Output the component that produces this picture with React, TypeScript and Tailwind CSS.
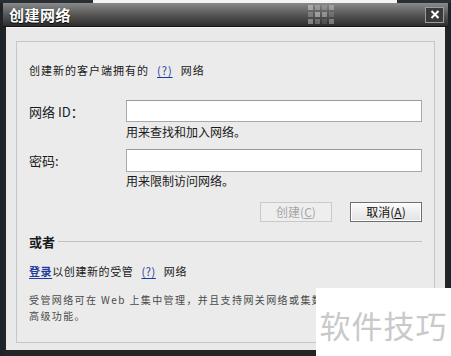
import React from "react";

const CJK = '"Noto Sans CJK SC", "Liberation Sans", sans-serif';

/* 标题栏右侧的方格装饰 */
function Checker() {
  const cells = [
    [0.5, 0.35, 0.25, 0.4],
    [0.3, 0.55, 0.45, 0.2],
    [0.45, 0.3, 0.15, 0.4],
  ];
  return (
    <div className="flex flex-col gap-[2px]">
      {cells.map((row, i) => (
        <div key={i} className="flex gap-[2px]">
          {row.map((o, j) => (
            <span
              key={j}
              className="block w-[5px] h-[5px] bg-[#d8d8d8]"
              style={{ opacity: o }}
            />
          ))}
        </div>
      ))}
    </div>
  );
}

function HelpLink() {
  return <span className="text-[#1f3c9c] underline underline-offset-2 mx-[8px]">(?)</span>;
}

export default function App() {
  return (
    <div
      className="relative w-[451px] h-[356px] overflow-hidden bg-[#1c2329] flex flex-col"
      style={{ fontFamily: CJK }}
    >
      {/* 顶部背景条 */}
      <div className="h-[3px] flex">
        <div className="w-[93px] bg-[#2a2f33]" />
        <div className="w-[304px] bg-[#f4f4f4]" />
        <div className="flex-1 bg-[#2a2f33]" />
      </div>

      {/* 窗口 */}
      <div className="ml-[3px] w-[445px] flex-1 flex flex-col bg-[#242424]">
        {/* 标题栏 */}
        <div className="relative h-[24px] flex items-center pl-[6px] pr-[4px] bg-gradient-to-b from-[#8a8a8a] via-[#575757] to-[#2e2e2e] border-b border-[#151515]">
          <span className="text-white font-bold text-[15px] leading-none tracking-[0.5px] [text-shadow:0_1px_1px_#000]">
            创建网络
          </span>
          <div className="absolute left-[305px] top-[2px]">
            <Checker />
          </div>
          <div className="ml-auto w-[19px] h-[16px] border border-[#9c9c9c] bg-[#3a3a3a] flex items-center justify-center">
            <svg width="10" height="9" viewBox="0 0 10 9">
              <path d="M1.5 1 L8.5 8 M8.5 1 L1.5 8" stroke="#fff" strokeWidth="2" />
            </svg>
          </div>
        </div>

        {/* 窗体 */}
        <div className="mx-[3px] mb-[6px] flex-1 bg-[#e9e9e9] border-t border-[#f6f6f6] pt-[13px] pl-[10px] pr-[10px] pb-[7px] flex">
          <div className="flex-1 border border-[#c6c6c6] bg-[#ebebeb] overflow-hidden px-[12px] flex flex-col text-[#1a1a1a]">
            <div className="mt-[20px] h-[16px] flex items-center text-[11px] tracking-[1px] whitespace-nowrap">
              创建新的客户端拥有的
              <HelpLink />
              网络
            </div>

            <div className="mt-[22px] grid grid-cols-[97px_1fr] items-center">
              <span className="text-[13px] leading-none">网络 ID：</span>
              <div className="h-[22px] bg-white border border-[#a9a9a9] border-t-[#9a9a9a]" />
              <span />
              <span className="mt-[2px] h-[16px] text-[12px] leading-[16px]">用来查找和加入网络。</span>
            </div>

            <div className="mt-[9px] grid grid-cols-[97px_1fr] items-center">
              <span className="text-[13px] leading-none">密码:</span>
              <div className="h-[23px] bg-white border border-[#a9a9a9] border-t-[#9a9a9a]" />
              <span />
              <span className="mt-[1px] h-[16px] text-[12px] leading-[16px]">用来限制访问网络。</span>
            </div>

            <div className="mt-[13px] flex justify-end gap-[18px]">
              <button className="w-[72px] h-[20px] border border-[#c9c9c9] bg-[#eeeeee] text-[#a6a6a6] text-[12px] leading-none">
                创建(<span className="underline">C</span>)
              </button>
              <button className="w-[72px] h-[20px] border border-[#6f6f6f] bg-gradient-to-b from-[#fbfbfb] to-[#e2e2e2] text-[#111] text-[12px] leading-none shadow-[inset_0_0_0_1px_#fff]">
                取消(<span className="underline">A</span>)
              </button>
            </div>

            <div className="mt-[11px] h-[16px] flex items-center gap-[3px]">
              <span className="font-bold text-[13px] leading-none">或者</span>
              <div className="flex-1 h-px bg-[#c2c2c2]" />
            </div>

            <div className="mt-[14px] h-[16px] flex items-center text-[11px] tracking-[0.6px] whitespace-nowrap">
              <span className="text-[#1f3c9c] font-bold underline underline-offset-2">登录</span>
              以创建新的受管
              <HelpLink />
              网络
            </div>

            <div className="mt-[13px] text-[10px] leading-[16px] tracking-[1.4px] text-[#4a4a4a] whitespace-nowrap">
              受管网络可在 Web 上集中管理，并且支持网关网络或集数据中心等
              <br />
              高级功能。
            </div>
          </div>
        </div>
      </div>

      {/* 水印 */}
      <div className="absolute left-[316px] top-[288px] w-[135px] h-[68px] bg-white flex items-center justify-center">
        <span className="text-[31px] text-[#c9c9c9] tracking-[1px] leading-none mt-[4px]">软件技巧</span>
      </div>
    </div>
  );
}
